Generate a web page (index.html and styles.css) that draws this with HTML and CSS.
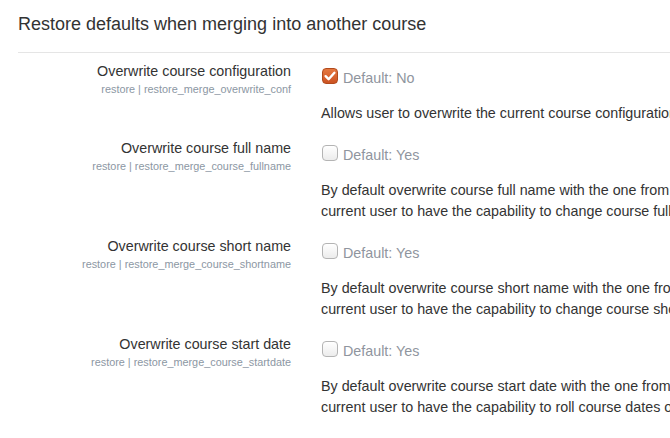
FILE: index.html
```html
<!DOCTYPE html>
<html>
<head>
<meta charset="utf-8">
<link rel="stylesheet" href="styles.css">
</head>
<body>
<div class="page">
  <h3 class="legend">Restore defaults when merging into another course</h3>
  <div class="settings">
    <div class="row">
      <div class="label">
        <div class="title">Overwrite course configuration</div>
        <div class="sub">restore | restore_merge_overwrite_conf</div>
      </div>
      <div class="control">
        <div class="checkline"><span class="cb checked"><svg viewBox="0 0 16 16" width="16" height="16"><path d="M3.6 8.2 L6.6 11.2 L12.4 4.8" fill="none" stroke="#fff" stroke-width="2.4" stroke-linecap="round" stroke-linejoin="round"/></svg></span><span class="default">Default: No</span></div>
        <div class="desc">Allows user to overwrite the current course configuration</div>
      </div>
    </div>
    <div class="row">
      <div class="label">
        <div class="title">Overwrite course full name</div>
        <div class="sub">restore | restore_merge_course_fullname</div>
      </div>
      <div class="control">
        <div class="checkline"><span class="cb"></span><span class="default">Default: Yes</span></div>
        <div class="desc">By default overwrite course full name with the one from the course being restored. This requires the<br>current user to have the capability to change course full name.</div>
      </div>
    </div>
    <div class="row">
      <div class="label">
        <div class="title">Overwrite course short name</div>
        <div class="sub">restore | restore_merge_course_shortname</div>
      </div>
      <div class="control">
        <div class="checkline"><span class="cb"></span><span class="default">Default: Yes</span></div>
        <div class="desc">By default overwrite course short name with the one from the course being restored. This requires the<br>current user to have the capability to change course short name.</div>
      </div>
    </div>
    <div class="row">
      <div class="label">
        <div class="title">Overwrite course start date</div>
        <div class="sub">restore | restore_merge_course_startdate</div>
      </div>
      <div class="control">
        <div class="checkline"><span class="cb"></span><span class="default">Default: Yes</span></div>
        <div class="desc">By default overwrite course start date with the one from the course being restored. This requires the<br>current user to have the capability to roll course dates on restore.</div>
      </div>
    </div>
  </div>
</div>
</body>
</html>
```
FILE: styles.css
```css
html, body {
  margin: 0;
  padding: 0;
  background: #fff;
  overflow: hidden;
}
body {
  font-family: "Liberation Sans", Arial, sans-serif;
  font-size: 14.3px;
  color: #333;
}
.page {
  width: 1000px;
  padding-left: 18px;
}
.legend {
  margin: 0;
  padding-top: 12px;
  font-size: 18px;
  font-weight: normal;
  line-height: 24px;
  color: #333;
  padding-bottom: 16px;
  border-bottom: 1px solid #e5e5e5;
}
.settings {
  padding-top: 8px;
}
.row {
  display: grid;
  grid-template-columns: 273px 1fr;
  column-gap: 30px;
  margin-bottom: 14px;
}
.label {
  text-align: right;
}
.title {
  font-size: 14.3px;
  line-height: 20px;
  color: #333;
}
.sub {
  font-size: 10.85px;
  line-height: 17px;
  color: #8c97a3;
}
.control {
  padding-top: 7px;
}
.checkline {
  display: flex;
  align-items: center;
  line-height: 20px;
  height: 20px;
}
.cb {
  display: inline-block;
  box-sizing: border-box;
  width: 16px;
  height: 16px;
  margin-left: 1px;
  margin-right: 5px;
  border-radius: 4px;
  border: 1px solid #b4b4b4;
  background: linear-gradient(#fff, #ececec);
  position: relative;
  top: -2px;
}
.cb.checked {
  border-color: #b24a1c;
  background: linear-gradient(#e5783f, #cc5322);
}
.cb svg {
  position: absolute;
  left: -1px;
  top: -1px;
}
.default {
  color: #8f959e;
}
.desc {
  margin-top: 15px;
  line-height: 21px;
  white-space: nowrap;
  color: #333;
}
```
